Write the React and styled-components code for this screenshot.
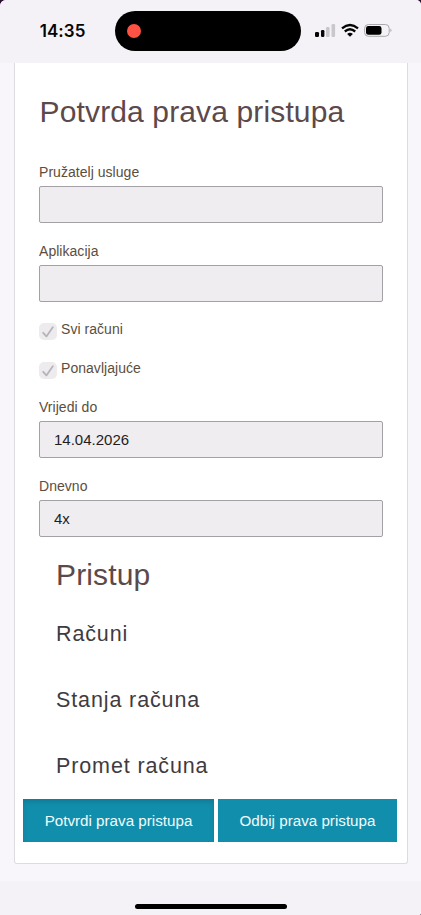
import React from "react";
import styled, { createGlobalStyle } from "styled-components";

const GlobalStyle = createGlobalStyle`
  * { box-sizing: border-box; }
  html, body { margin: 0; padding: 0; background: #2a1030; overflow: hidden; }
  body { font-family: "Liberation Sans", Arial, Helvetica, sans-serif; }
  button, input { font-family: inherit; }
`;

const Screen = styled.div`
  width: 421px;
  height: 915px;
  display: flex;
  flex-direction: column;
  background: #f8f6fa;
  border-radius: 6px 5px 2px 0;
  overflow: hidden;
`;

const StatusBar = styled.header`
  flex: none;
  height: 63px;
  display: flex;
  align-items: flex-start;
  background: #f4f2f6;
`;

const Clock = styled.time`
  width: 115px;
  padding: 20px 0 0 39.7px;
  font: 600 17px/22px Inter, sans-serif;
  letter-spacing: 0.05px;
  color: #050505;
`;

const Island = styled.div`
  width: 186px;
  height: 40px;
  margin-top: 11px;
  padding-left: 12px;
  display: flex;
  align-items: center;
  border-radius: 20px;
  background: #000;
`;

const RecordDot = styled.span`
  width: 14px;
  height: 14px;
  border-radius: 50%;
  background: #ff5144;
`;

const StatusIcons = styled.div`
  display: flex;
  gap: 5px;
  padding: 23px 0 0 14px;

  svg { display: block; }
`;

const Page = styled.main`
  flex: none;
  height: 818px;
  padding: 0 13px 0 14px;
`;

const Card = styled.section`
  height: 801px;
  padding-top: 31px;
  background: #fff;
  border: 1px solid #dddbe0;
  border-top: 0;
  border-radius: 0 0 3px 3px;
`;

const Title = styled.h1`
  margin: 0;
  padding-left: 24.6px;
  font-size: 30px;
  line-height: 36px;
  font-weight: 400;
  letter-spacing: 0.13px;
  color: #5c494b;
`;

const Form = styled.form`
  margin-top: 30px;
  padding: 0 24px;
`;

const Field = styled.label`
  display: block;
  height: 63px;
  margin-bottom: 16px;
`;

const Caption = styled.span`
  display: block;
  height: 24px;
  font-size: 14px;
  line-height: 24px;
  letter-spacing: 0.04px;
  color: #5b4e40;
`;

const Input = styled.input`
  display: block;
  width: 344px;
  height: 37px;
  margin-top: 2px;
  padding: 0 14px;
  border: 1px solid #a3a1a5;
  border-radius: 2px;
  background: #efedf0;
  font-size: 15px;
  color: #1f1d20;
  outline: 0;
`;

const Checks = styled.div`
  display: flex;
  flex-direction: column;
  gap: 15px;
  margin: -1px 0 15px;
`;

const CheckRow = styled.div`
  height: 24px;
  display: flex;
  gap: 4px;
`;

const Checkbox = styled.span`
  width: 18px;
  height: 17px;
  margin-top: 6px;
  display: flex;
  align-items: center;
  justify-content: center;
  border-radius: 5px;
  background: #edebee;
`;

const Access = styled.div`
  margin-top: 20px;
  padding-left: 41px;
`;

const AccessTitle = styled(Title).attrs({ as: "h2" })`
  padding-left: 0;
  margin-bottom: 7px;
`;

const AccessItem = styled.div`
  height: 66px;
  font-size: 21.5px;
  line-height: 69px;
  letter-spacing: 0.88px;
  color: #3f3b40;
`;

const Actions = styled.div`
  display: flex;
  gap: 4px;
  padding: 1px 0 0 8px;
`;

const Action = styled.button`
  width: ${(p) => (p.$pressed ? 191 : 179)}px;
  height: 43px;
  padding: 0;
  border: 0;
  background: #118eac;
  box-shadow: ${(p) => (p.$pressed ? "inset 0 3px 5px rgba(0, 0, 0, 0.13)" : "none")};
  font-size: 15.2px;
  line-height: 43px;
  color: #f2fbfc;
`;

const HomeBar = styled.footer`
  flex: 1;
  display: flex;
  justify-content: center;
  align-items: flex-start;
  padding-top: 23px;
  background: #f4f2f6;
`;

const HomeIndicator = styled.span`
  width: 152px;
  height: 5px;
  border-radius: 3px;
  background: #000;
`;

const Signal = () => (
  <svg width="21" height="14" viewBox="0 0 21 14">
    <rect x="0" y="9" width="4" height="5" rx="1.2" fill="#050505" />
    <rect x="6" y="7" width="3.4" height="7" rx="1.2" fill="#050505" />
    <rect x="11" y="4" width="3.6" height="10" rx="1.2" fill="#c9c7cb" />
    <rect x="16.5" y="1" width="3.6" height="13" rx="1.2" fill="#c9c7cb" />
  </svg>
);

const Wifi = () => (
  <svg width="18" height="14" viewBox="0 0 18 14" fill="none" stroke="#050505" strokeWidth="2.3">
    <path d="M1 5.4Q9-1.4 17 5.4" />
    <path d="M3.8 8.5Q9 4.1 14.2 8.5" />
    <path d="M6.1 10.9Q9 8.5 11.9 10.9L9 13.8Z" fill="#050505" stroke="none" />
  </svg>
);

const Battery = () => (
  <svg width="28" height="14" viewBox="0 0 28 14">
    <rect x=".6" y="1.5" width="24.6" height="11.8" rx="3.8" fill="none" stroke="#aaa8ac" />
    <rect x="2" y="3" width="15.5" height="8.8" rx="2.4" fill="#000" />
    <path d="M26.5 5.5Q28.2 7.2 26.5 9Z" fill="#99979b" />
  </svg>
);

const Tick = () => (
  <svg width="12" height="12" viewBox="0 0 12 12" fill="none">
    <path d="M1.2 6.8L4.4 10.4L10.8 1.2" stroke="#b7b4b9" strokeWidth="1.8" strokeLinecap="round" strokeLinejoin="round" />
  </svg>
);

const TextField = ({ label, value = "" }) => (
  <Field>
    <Caption>{label}</Caption>
    <Input readOnly value={value} />
  </Field>
);

const CheckField = ({ label }) => (
  <CheckRow>
    <Checkbox><Tick /></Checkbox>
    <Caption>{label}</Caption>
  </CheckRow>
);

export default function App() {
  return (
    <>
      <GlobalStyle />
      <Screen>
        <StatusBar>
          <Clock>14:35</Clock>
          <Island><RecordDot /></Island>
          <StatusIcons>
            <Signal />
            <Wifi />
            <Battery />
          </StatusIcons>
        </StatusBar>
        <Page>
          <Card>
            <Title>Potvrda prava pristupa</Title>
            <Form>
              <TextField label="Pružatelj usluge" />
              <TextField label="Aplikacija" />
              <Checks>
                <CheckField label="Svi računi" />
                <CheckField label="Ponavljajuće" />
              </Checks>
              <TextField label="Vrijedi do" value="14.04.2026" />
              <TextField label="Dnevno" value="4x" />
            </Form>
            <Access>
              <AccessTitle>Pristup</AccessTitle>
              <AccessItem>Računi</AccessItem>
              <AccessItem>Stanja računa</AccessItem>
              <AccessItem>Promet računa</AccessItem>
            </Access>
            <Actions>
              <Action type="button" $pressed>Potvrdi prava pristupa</Action>
              <Action type="button">Odbij prava pristupa</Action>
            </Actions>
          </Card>
        </Page>
        <HomeBar><HomeIndicator /></HomeBar>
      </Screen>
    </>
  );
}
